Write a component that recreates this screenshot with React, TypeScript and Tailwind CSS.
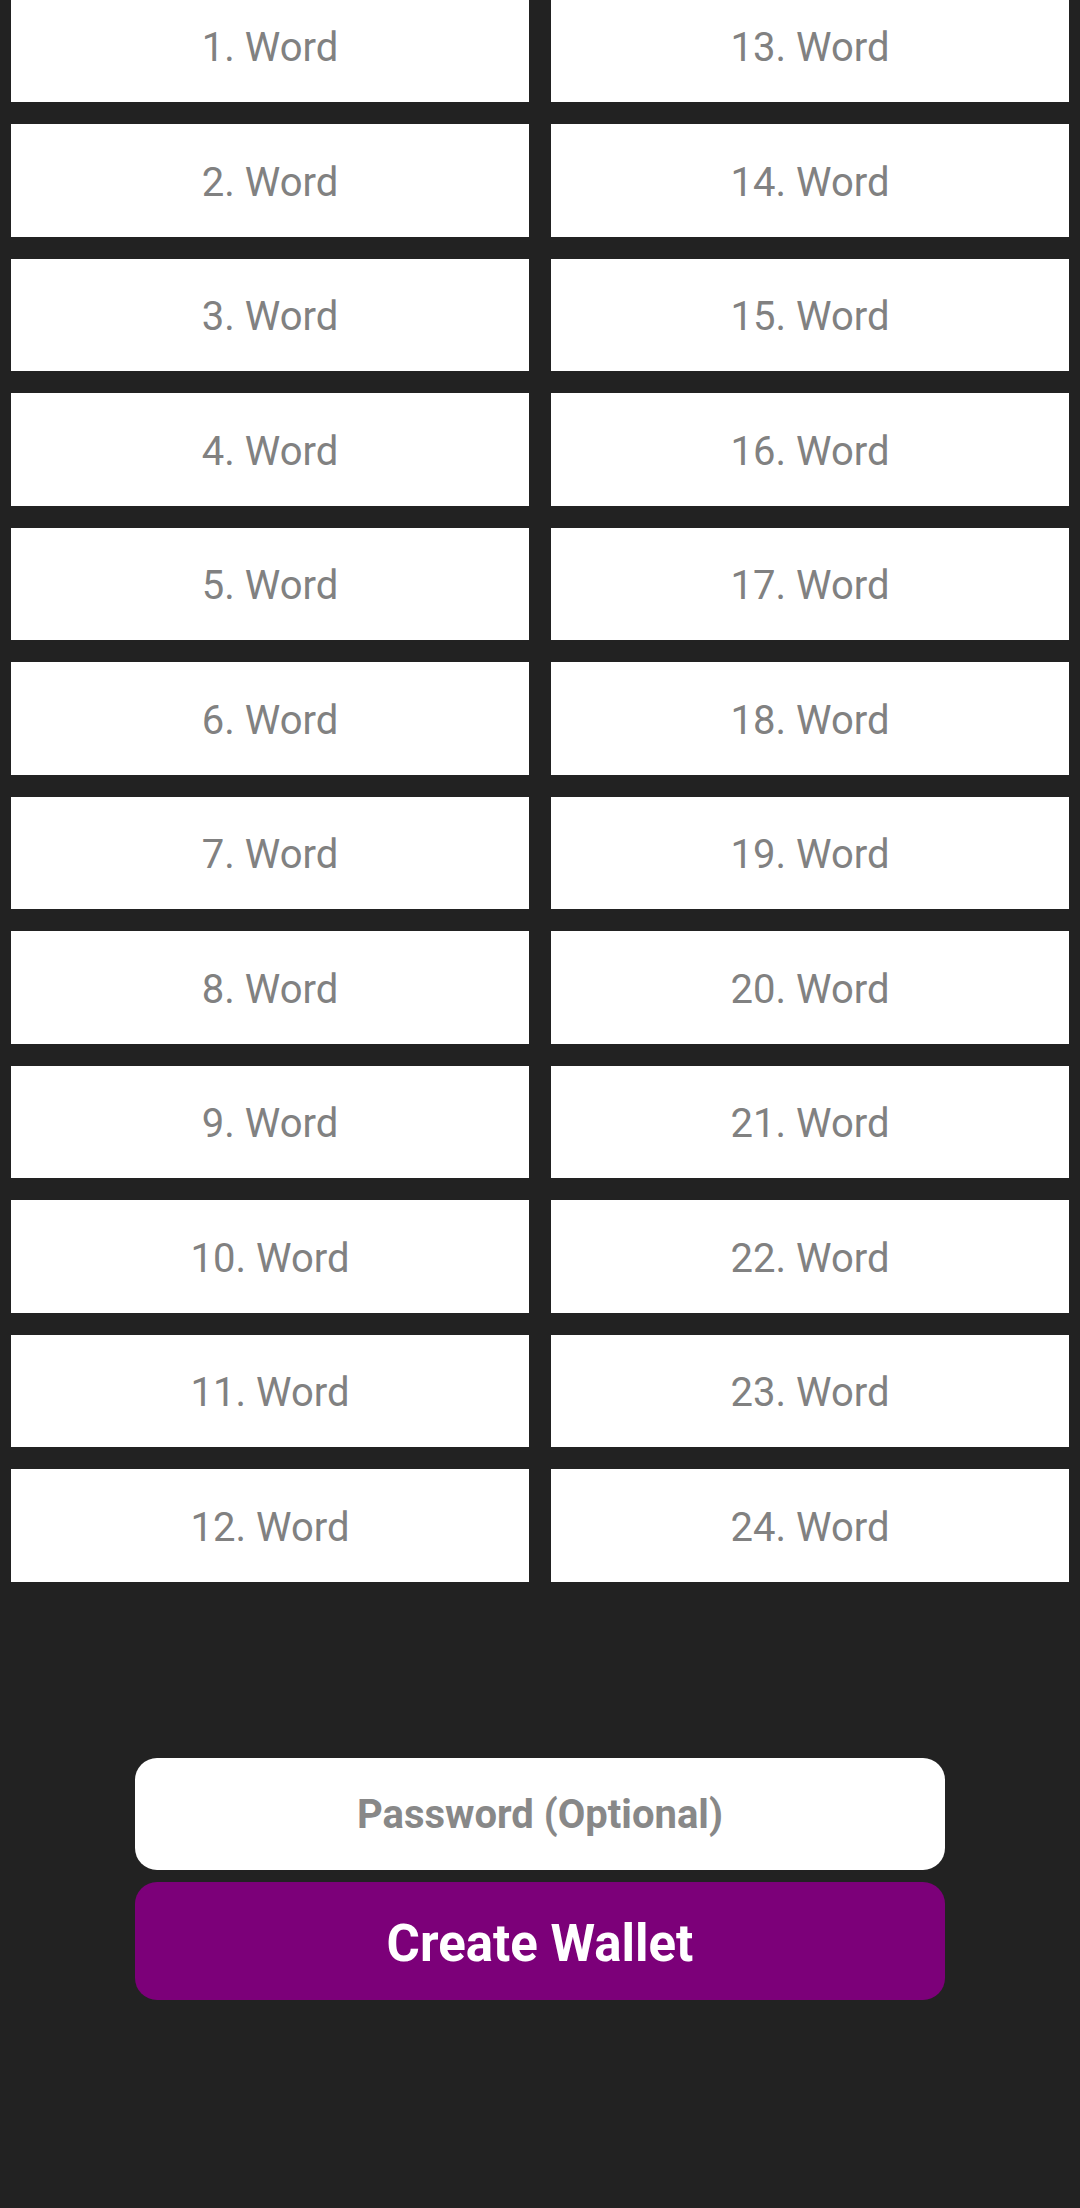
import React from 'react';

const left = Array.from({ length: 12 }, (_, i) => i + 1);
const right = Array.from({ length: 12 }, (_, i) => i + 13);

const WordCell: React.FC<{ n: number }> = ({ n }) => (
  <div className="h-[112.5px] pt-[5px] bg-white flex items-center justify-center">
    <span className="text-[40px] leading-none text-[#818181]">{n}. Word</span>
  </div>
);

export default function App() {
  return (
    <div
      className="min-h-[2208px] bg-[#222222] overflow-hidden"
      style={{ fontFamily: 'Roboto, "Noto Sans", sans-serif' }}
    >
      {/* Seed words */}
      <div className="-mt-[10.5px] px-[11px] grid grid-cols-2 gap-x-[22px]">
        <div className="flex flex-col gap-y-[22px]">
          {left.map((n) => (
            <WordCell key={n} n={n} />
          ))}
        </div>
        <div className="flex flex-col gap-y-[22px]">
          {right.map((n) => (
            <WordCell key={n} n={n} />
          ))}
        </div>
      </div>

      {/* Password + action */}
      <div className="mt-[176px] mx-auto w-[810px] flex flex-col gap-[12px]">
        <div className="h-[112px] pt-[3px] bg-white rounded-[22px] flex items-center justify-center">
          <span className="text-[40px] font-bold text-[#888888] leading-none">Password (Optional)</span>
        </div>
        <button className="h-[118px] pt-[5px] bg-[#7c0079] rounded-[22px] flex items-center justify-center">
          <span className="text-[51px] font-bold text-white leading-none">Create Wallet</span>
        </button>
      </div>
    </div>
  );
}
